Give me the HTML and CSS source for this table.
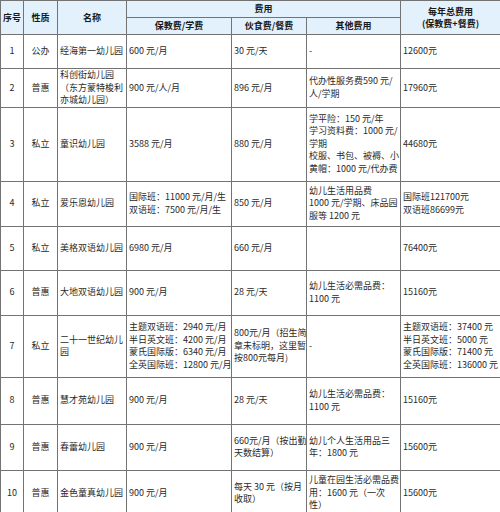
FILE: index.html
```html
<!DOCTYPE html>
<html lang="zh-CN">
<head>
<meta charset="utf-8">
<title>幼儿园费用</title>
<link rel="stylesheet" href="styles.css">
</head>
<body>
<table class="fees">
  <colgroup>
    <col class="c-no"><col class="c-type"><col class="c-name"><col class="c-tuition"><col class="c-meal"><col class="c-other"><col class="c-total">
  </colgroup>
  <thead>
    <tr class="h17">
      <th rowspan="2">序号</th>
      <th rowspan="2">性质</th>
      <th rowspan="2">名称</th>
      <th colspan="3">费用</th>
      <th rowspan="2">每年总费用<br>(保教费+餐费)</th>
    </tr>
    <tr class="h17">
      <th>保教费/学费</th>
      <th>伙食费/餐费</th>
      <th>其他费用</th>
    </tr>
  </thead>
  <tbody>
    <tr class="h34">
      <td class="ctr">1</td><td class="ctr">公办</td><td>经海第一幼儿园</td><td>600 元/月</td><td>30 元/天</td><td>-</td><td>12600元</td>
    </tr>
    <tr class="h37">
      <td class="ctr">2</td><td class="ctr">普惠</td><td>科创街幼儿园<br>（东方蒙特梭利<br>亦城幼儿园）</td><td>900 元/人/月</td><td>896 元/月</td><td>代办性服务费590 元/<br>人/学期</td><td>17960元</td>
    </tr>
    <tr class="h74">
      <td class="ctr">3</td><td class="ctr">私立</td><td>童识幼儿园</td><td>3588 元/月</td><td>880 元/月</td><td>学平险：150 元/年<br>学习资料费：1000 元/<br>学期<br>校服、书包、被褥、小<br>黄帽：1000 元/代办费</td><td>44680元</td>
    </tr>
    <tr class="h45">
      <td class="ctr">4</td><td class="ctr">私立</td><td>爱乐恩幼儿园</td><td>国际班：11000 元/月/生<br>双语班：7500 元/月/生</td><td>850 元/月</td><td>幼儿生活用品费<br>1000 元/学期、床品园<br>服等 1200 元</td><td>国际班121700元<br>双语班86699元</td>
    </tr>
    <tr class="h44">
      <td class="ctr">5</td><td class="ctr">私立</td><td>美格双语幼儿园</td><td>6980 元/月</td><td>660 元/月</td><td></td><td>76400元</td>
    </tr>
    <tr class="h45">
      <td class="ctr">6</td><td class="ctr">普惠</td><td>大地双语幼儿园</td><td>900 元/月</td><td>28 元/天</td><td>幼儿生活必需品费：<br>1100 元</td><td>15160元</td>
    </tr>
    <tr class="h62">
      <td class="ctr">7</td><td class="ctr">私立</td><td>二十一世纪幼儿<br>园</td><td>主题双语班：2940 元/月<br>半日英文班：4200 元/月<br>蒙氏国际版：6340 元/月<br>全英国际班：12800 元/月</td><td>800元/月（招生简<br>章未标明，这里暂<br>按800元每月)</td><td>-</td><td>主题双语班：37400 元<br>半日英文班：5000 元<br>蒙氏国际版：71400 元<br>全英国际班：136000 元</td>
    </tr>
    <tr class="h47">
      <td class="ctr">8</td><td class="ctr">普惠</td><td>慧才苑幼儿园</td><td>900 元/月</td><td>28 元/天</td><td>幼儿生活必需品费：<br>1100 元</td><td>15160元</td>
    </tr>
    <tr class="h46">
      <td class="ctr">9</td><td class="ctr">普惠</td><td>春蕾幼儿园</td><td>900 元/月</td><td>660元/月（按出勤<br>天数结算）</td><td>幼儿个人生活用品三<br>年：1800 元</td><td>15600元</td>
    </tr>
    <tr class="h46">
      <td class="ctr">10</td><td class="ctr">普惠</td><td>金色童真幼儿园</td><td>900 元/月</td><td>每天 30 元（按月<br>收取）</td><td>儿童在园生活必需品费<br>用：1600 元（一次<br>性）</td><td>15600元</td>
    </tr>
  </tbody>
</table>
</body>
</html>
```

FILE: styles.css
```css
html, body {
  margin: 0;
  padding: 0;
  background: #ffffff;
  overflow: hidden;
}

.fees {
  width: 500px;
  table-layout: fixed;
  border-collapse: collapse;
  font-family: "Noto Sans CJK SC", "Noto Sans", sans-serif;
  font-size: 9px;
  line-height: 12.5px;
  color: #2a2a2a;
}

.c-no { width: 23px; }
.c-type { width: 34px; }
.c-name { width: 69px; }
.c-tuition { width: 105px; }
.c-meal { width: 75px; }
.c-other { width: 94px; }
.c-total { width: 100px; }

.fees th,
.fees td {
  border: 1px solid #737373;
  padding: 0 0 0 2px;
  vertical-align: middle;
  white-space: nowrap;
  overflow: hidden;
}

.fees th {
  background: #e2f1fb;
  font-weight: bold;
  text-align: center;
  padding: 0;
  line-height: 12px;
  color: #1a1a1a;
}

.fees td {
  text-align: left;
}

.fees td.ctr {
  text-align: center;
  padding: 0;
}

.h17 { height: 17px; }
.h34 { height: 34px; }
.h37 { height: 37px; }
.h74 { height: 74px; }
.h45 { height: 45px; }
.h44 { height: 44px; }
.h62 { height: 62px; }
.h47 { height: 47px; }
.h46 { height: 46px; }
```
